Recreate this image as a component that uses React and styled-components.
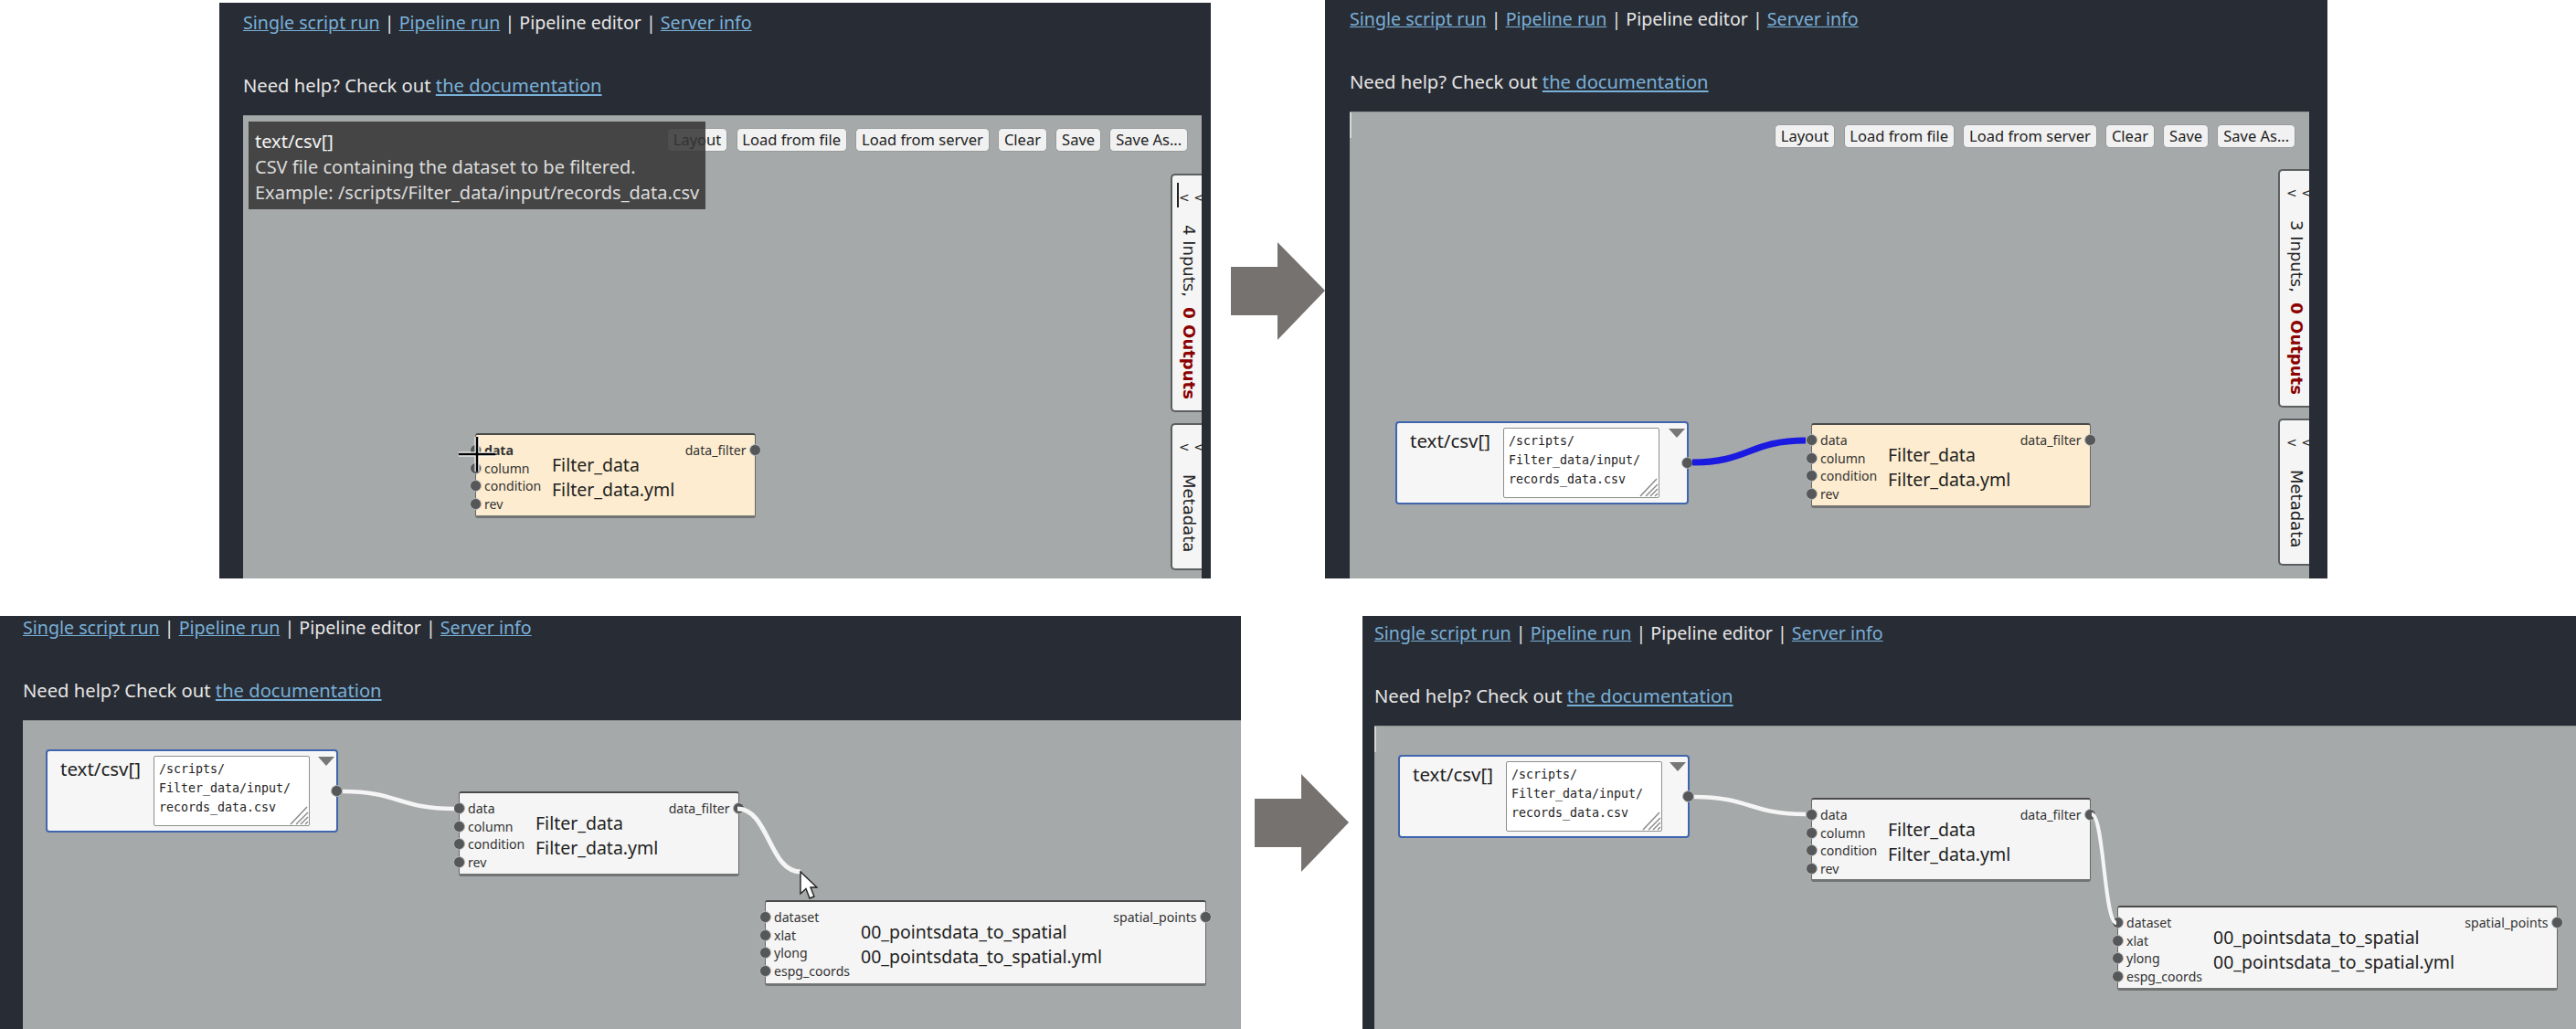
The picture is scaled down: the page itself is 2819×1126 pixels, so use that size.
import React from "react";
import styled, { createGlobalStyle } from "styled-components";

const Global = createGlobalStyle`
  html, body { margin: 0; padding: 0; background: #fff; }
  body { font-family: "Noto Sans", sans-serif; }
`;

const Stage = styled.div`
  position: relative;
  width: 2819px;
  height: 1126px;
  overflow: hidden;
  background: #fff;
`;

const Window = styled.section`
  position: absolute;
  left: ${(p) => p.$x}px;
  top: ${(p) => p.$y}px;
  width: ${(p) => p.$w}px;
  height: ${(p) => p.$h}px;
  box-sizing: border-box;
  padding: ${(p) => p.$padTop}px ${(p) => p.$padRight}px 0 ${(p) => p.$padLeft}px;
  background: #282c34;
  color: #e6e6e6;
  display: flex;
  flex-direction: column;
`;

const Line = styled.div`
  flex: none;
  height: 26px;
  line-height: 26px;
  white-space: nowrap;
`;

const Nav = styled(Line)`
  font-size: 19.6px;
  margin-bottom: 42px;
`;

const Help = styled(Line)`
  font-size: 20.2px;
  margin-bottom: 20px;
`;

const Link = styled.a`
  color: #79b0d8;
  text-decoration: underline;
`;

const Canvas = styled.div`
  position: relative;
  flex: 1;
  min-height: 0;
  overflow: hidden;
  background: #a6a9a9;
  border-top: 1px solid #8d9090;
  box-sizing: border-box;
  ${(p) =>
    p.$strip &&
    `&::before {
      content: "";
      position: absolute;
      left: 0;
      top: 0;
      width: 2px;
      height: 28px;
      background: #d4d6d6;
    }`}
`;

const Toolbar = styled.div`
  position: absolute;
  top: 13px;
  right: 15px;
  display: flex;
  gap: 9.5px;
  z-index: 1;
`;

const ToolButton = styled.button`
  height: 26px;
  margin: 0;
  padding: 0 5.8px;
  font-family: "Noto Sans", sans-serif;
  font-size: 16.5px;
  line-height: 22px;
  color: #222;
  background: #f1f1f1;
  border: 1px solid #989b9b;
  border-radius: 5px;
  white-space: nowrap;
`;

const Tooltip = styled.div`
  position: absolute;
  left: 6px;
  top: 6px;
  width: 500px;
  height: 96px;
  box-sizing: border-box;
  padding: 8px 7px;
  background: rgba(54, 54, 54, 0.87);
  color: #dcdcdc;
  font-size: 20px;
  line-height: 28px;
  white-space: nowrap;
  z-index: 5;
`;

const TooltipHead = styled.div`
  color: #f4f4f4;
`;

const Tabs = styled.div`
  position: absolute;
  top: ${(p) => p.$top}px;
  right: 0;
  display: flex;
  flex-direction: column;
  gap: 12px;
  z-index: 1;
`;

const Tab = styled.div`
  position: relative;
  width: 34px;
  height: ${(p) => p.$h}px;
  box-sizing: border-box;
  padding: 16px 0 0 7px;
  overflow: hidden;
  background: #f5f5f5;
  border: 2px solid #5c5f5f;
  border-right: 0;
  border-radius: 5px 0 0 5px;
  font-family: "DejaVu Sans", sans-serif;
  color: #222;
`;

const Chevrons = styled.div`
  font-size: 14px;
  line-height: 16px;
  height: 16px;
  width: 40px;
  white-space: pre;
  margin-bottom: 22px;
`;

const TabLabel = styled.div`
  writing-mode: vertical-rl;
  font-size: 18px;
  line-height: 22px;
  white-space: pre;
`;

const Outputs = styled.span`
  color: #8b0000;
  font-weight: 700;
`;

const Caret = styled.span`
  position: absolute;
  left: 5px;
  top: 8px;
  width: 1.5px;
  height: 27px;
  background: #222;
`;

const NodeBox = styled.div`
  position: absolute;
  left: ${(p) => p.$x}px;
  top: ${(p) => p.$y}px;
  width: ${(p) => p.$w}px;
  height: ${(p) => p.$h}px;
  box-sizing: border-box;
  background: ${(p) => p.$bg};
  border: 1px solid #666;
  border-top: 2px solid #4a4a4a;
  border-bottom: 3px solid #727474;
  border-radius: 3px;
  display: grid;
  grid-template-columns: ${(p) => p.$col}px 1fr auto;
  padding-top: 7px;
  z-index: 2;
  color: #222;
`;

const PortList = styled.div`
  display: flex;
  flex-direction: column;
`;

const PortRow = styled.div`
  display: flex;
  align-items: center;
  gap: 3px;
  height: 19.5px;
  font-size: 14.1px;
  color: #333;
  white-space: nowrap;
  font-weight: ${(p) => (p.$bold ? 700 : 400)};
`;

const Port = styled.span`
  flex: none;
  width: 13px;
  height: 13px;
  box-sizing: border-box;
  border-radius: 50%;
  background: #555758;
  border: 1px solid #b7baba;
  margin: 0 ${(p) => (p.$side === "out" ? -6.5 : 0)}px 0 ${(p) => (p.$side === "in" ? -7 : 0)}px;
`;

const Titles = styled.div`
  padding-top: 12px;
  font-size: 19.5px;
  line-height: 27px;
  white-space: nowrap;
`;

const InputBox = styled.div`
  position: absolute;
  left: ${(p) => p.$x}px;
  top: ${(p) => p.$y}px;
  width: ${(p) => p.$w}px;
  height: 91px;
  box-sizing: border-box;
  background: #f6f6f6;
  border: 2px solid #3f65ae;
  border-radius: 4px;
  display: flex;
  align-items: flex-start;
  padding: 5px 0 0 14px;
  z-index: 2;
  color: #222;
`;

const InputLabel = styled.div`
  width: 102px;
  flex: none;
  font-size: 20.5px;
  line-height: 26px;
  white-space: nowrap;
  padding-top: 1px;
`;

const PathField = styled.div`
  position: relative;
  width: 171px;
  height: 77px;
  box-sizing: border-box;
  padding: 3px 0 0 5px;
  background: #fff;
  border: 1.5px solid #8f8f8f;
  border-radius: 2px;
  font-family: "DejaVu Sans Mono", monospace;
  font-size: 13.3px;
  line-height: 21px;
  color: #222;
  white-space: pre;
`;

const Grip = styled.svg`
  position: absolute;
  right: 0;
  bottom: 0;
`;

const Triangle = styled.span`
  position: absolute;
  right: 2px;
  top: 6px;
  width: 0;
  height: 0;
  border-left: 9.5px solid transparent;
  border-right: 9.5px solid transparent;
  border-top: 10px solid #767878;
`;

const OutPort = styled(Port)`
  position: absolute;
  right: -7px;
  top: 37px;
`;

const WireLayer = styled.svg`
  position: absolute;
  left: 0;
  top: 0;
  width: 100%;
  height: 100%;
  z-index: 3;
  pointer-events: none;
`;

const Pointer = styled.svg`
  position: absolute;
  left: ${(p) => p.$x}px;
  top: ${(p) => p.$y}px;
  z-index: 4;
`;

const FlowArrow = styled.svg`
  position: absolute;
  left: ${(p) => p.$x}px;
  top: ${(p) => p.$y}px;
`;

function Wire({ from, to, color, width }) {
  const mid = (from[0] + to[0]) / 2;
  return (
    <path
      d={`M${from[0]} ${from[1]} C${mid} ${from[1]} ${mid} ${to[1]} ${to[0]} ${to[1]}`}
      fill="none"
      stroke={color}
      strokeWidth={width}
    />
  );
}

function Node({ x, y, w, h, col, bg, inputs, output, title, file, bold }) {
  return (
    <NodeBox $x={x} $y={y} $w={w} $h={h} $col={col} $bg={bg}>
      <PortList>
        {inputs.map((name, i) => (
          <PortRow key={name} $bold={bold && i === 0}>
            <Port $side="in" />
            {name}
          </PortRow>
        ))}
      </PortList>
      <Titles>
        <div>{title}</div>
        <div>{file}</div>
      </Titles>
      <PortList>
        <PortRow>
          {output}
          <Port $side="out" />
        </PortRow>
      </PortList>
    </NodeBox>
  );
}

function InputNode({ x, y, w }) {
  return (
    <InputBox $x={x} $y={y} $w={w}>
      <InputLabel>text/csv[]</InputLabel>
      <PathField>
        {"/scripts/\nFilter_data/input/\nrecords_data.csv"}
        <Grip width="22" height="22" viewBox="0 0 22 22">
          <g stroke="#8a8a8a" strokeWidth="1.5">
            <line x1="2" y1="21" x2="20" y2="2" />
            <line x1="8" y1="21" x2="21" y2="8" />
            <line x1="13" y1="21" x2="21" y2="13" />
            <line x1="18" y1="21" x2="21" y2="18" />
          </g>
        </Grip>
      </PathField>
      <Triangle />
      <OutPort />
    </InputBox>
  );
}

const FILTER = {
  inputs: ["data", "column", "condition", "rev"],
  output: "data_filter",
  title: "Filter_data",
  file: "Filter_data.yml",
  col: 83,
  w: 307,
  h: 93,
};

const POINTS = {
  inputs: ["dataset", "xlat", "ylong", "espg_coords"],
  output: "spatial_points",
  title: "00_pointsdata_to_spatial",
  file: "00_pointsdata_to_spatial.yml",
  col: 104,
  w: 483,
  h: 94,
  bg: "#f5f5f5",
};

function Arrow({ x, y }) {
  return (
    <FlowArrow $x={x} $y={y} width="103" height="107" viewBox="0 0 103 107">
      <polygon points="0,27 51,27 51,0 103,53 51,107 51,80 0,80" fill="#767270" />
    </FlowArrow>
  );
}

function Chrome({ x, y, w, h, padTop, padLeft, padRight, strip, children }) {
  return (
    <Window $x={x} $y={y} $w={w} $h={h} $padTop={padTop} $padLeft={padLeft} $padRight={padRight}>
      <Nav>
        <Link>Single script run</Link> | <Link>Pipeline run</Link> | Pipeline editor | <Link>Server info</Link>
      </Nav>
      <Help>
        Need help? Check out <Link>the documentation</Link>
      </Help>
      <Canvas $strip={strip}>{children}</Canvas>
    </Window>
  );
}

function Buttons() {
  return (
    <Toolbar>
      {["Layout", "Load from file", "Load from server", "Clear", "Save", "Save As..."].map((b) => (
        <ToolButton key={b}>{b}</ToolButton>
      ))}
    </Toolbar>
  );
}

function SideTabs({ top, count, caret }) {
  return (
    <Tabs $top={top}>
      <Tab $h={261}>
        {caret && <Caret />}
        <Chevrons>{"< <"}</Chevrons>
        <TabLabel>
          {count} Inputs,  <Outputs>0 Outputs</Outputs>
        </TabLabel>
      </Tab>
      <Tab $h={161}>
        <Chevrons>{"< <"}</Chevrons>
        <TabLabel>Metadata</TabLabel>
      </Tab>
    </Tabs>
  );
}

export default function App() {
  return (
    <Stage>
      <Global />
      <Chrome x={240} y={3} w={1085} h={630} padTop={9} padLeft={26} padRight={10}>
        <Buttons />
        <Tooltip>
          <TooltipHead>text/csv[]</TooltipHead>
          <div>CSV file containing the dataset to be filtered.</div>
          <div>Example: /scripts/Filter_data/input/records_data.csv</div>
        </Tooltip>
        <SideTabs top={63} count={4} caret />
        <Node {...FILTER} x={254} y={347} bg="#fdeccf" bold />
        <Pointer $x={235} $y={350} width="42" height="40" viewBox="0 0 42 40">
          <path d="M21 1V39M1 20H41" stroke="#fff" strokeWidth="5" />
          <path d="M21 1V39M1 20H41" stroke="#000" strokeWidth="2.5" />
        </Pointer>
      </Chrome>

      <Arrow x={1347} y={265} />

      <Chrome x={1450} y={0} w={1097} h={633} padTop={8} padLeft={27} padRight={20} strip>
        <Buttons />
        <SideTabs top={62} count={3} />
        <InputNode x={50} y={338} w={321} />
        <Node {...FILTER} x={505} y={340} w={306} bg="#fdeccf" />
        <WireLayer>
          <Wire from={[375, 383]} to={[499, 359]} color="#1a1ae0" width={7} />
        </WireLayer>
      </Chrome>

      <Chrome x={0} y={674} w={1358} h={452} padTop={0} padLeft={25} padRight={0}>
        <InputNode x={25} y={31} w={320} />
        <Node {...FILTER} x={477} y={77} bg="#f5f5f5" />
        <Node {...POINTS} x={812} y={196} />
        <WireLayer>
          <Wire from={[350, 77]} to={[472, 96]} color="#f5f5f5" width={4.5} />
          <Wire from={[782, 96]} to={[851, 165]} color="#f5f5f5" width={5} />
        </WireLayer>
        <Pointer $x={850} $y={164} width="20" height="32" viewBox="0 0 20 32">
          <path d="M1 1V25L7 19.5L11 30L16 28L12 18H19Z" fill="#fff" stroke="#222" strokeWidth="1.4" />
        </Pointer>
      </Chrome>

      <Arrow x={1373} y={847} />

      <Chrome x={1491} y={674} w={1328} h={452} padTop={6} padLeft={13} padRight={0} strip>
        <InputNode x={26} y={31} w={319} />
        <Node {...FILTER} x={478} y={78} w={306} h={92} bg="#f5f5f5" />
        <Node {...POINTS} x={813} y={196} w={482} h={93} />
        <WireLayer>
          <Wire from={[350, 77]} to={[472, 96]} color="#f5f5f5" width={4.5} />
          <Wire from={[785, 96]} to={[812, 215]} color="#f5f5f5" width={4} />
        </WireLayer>
      </Chrome>
    </Stage>
  );
}
